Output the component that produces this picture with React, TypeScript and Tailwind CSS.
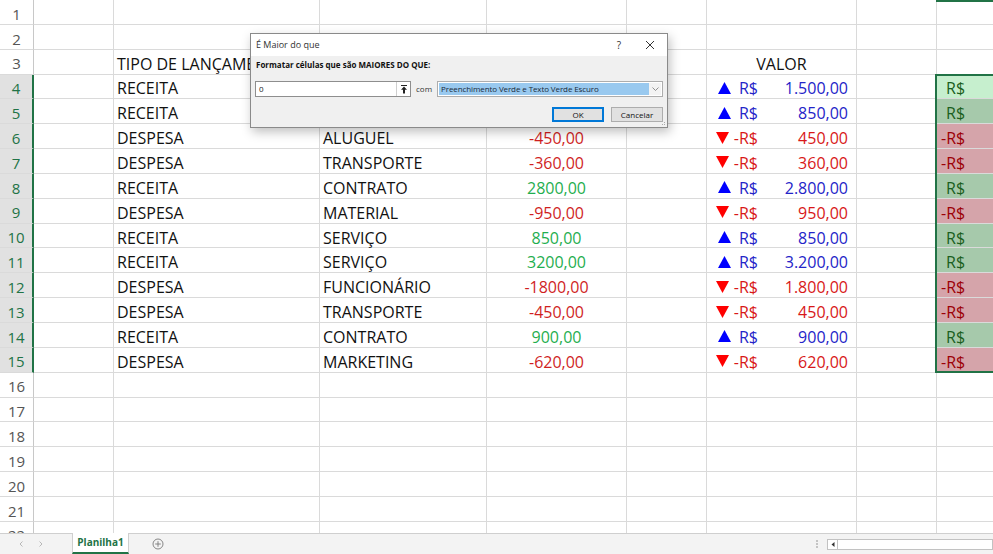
import React from "react"

interface Entry {
  tipo: string
  cat: string
  v: number
}

const entries: Entry[] = [
  { tipo: "RECEITA", cat: "VENDA", v: 1500 },
  { tipo: "RECEITA", cat: "SERVIÇO", v: 850 },
  { tipo: "DESPESA", cat: "ALUGUEL", v: -450 },
  { tipo: "DESPESA", cat: "TRANSPORTE", v: -360 },
  { tipo: "RECEITA", cat: "CONTRATO", v: 2800 },
  { tipo: "DESPESA", cat: "MATERIAL", v: -950 },
  { tipo: "RECEITA", cat: "SERVIÇO", v: 850 },
  { tipo: "RECEITA", cat: "SERVIÇO", v: 3200 },
  { tipo: "DESPESA", cat: "FUNCIONÁRIO", v: -1800 },
  { tipo: "DESPESA", cat: "TRANSPORTE", v: -450 },
  { tipo: "RECEITA", cat: "CONTRATO", v: 900 },
  { tipo: "DESPESA", cat: "MARKETING", v: -620 },
]

// 1500 -> "1.500,00"
function brl(n: number) {
  const s = String(Math.abs(n))
  const withDots = s.replace(/\B(?=(\d{3})+(?!\d))/g, ".")
  return `${withDots},00`
}

const cell = "h-full border-r border-b border-[#dadada] flex items-center shrink-0 pt-[4px]"

function Row({ n, children }: { n: number; children?: React.ReactNode }) {
  const selected = n >= 4 && n <= 15
  return (
    <div className="flex h-[24.85px]">
      <div
        className={`w-[34px] h-full shrink-0 flex items-center justify-center pt-[4px] text-[15px] border-b border-[#dadada] ${
          selected
            ? "bg-[#e1e1e1] text-[#217346] border-r-2 border-r-[#217346]"
            : "bg-white text-[#555] border-r border-r-[#c8c8c8]"
        }`}
      >
        {n}
      </div>
      {children ?? (
        <>
          <div className={`${cell} w-[80px]`} />
          <div className={`${cell} w-[206px]`} />
          <div className={`${cell} w-[167px]`} />
          <div className={`${cell} w-[140px]`} />
          <div className={`${cell} w-[80px]`} />
          <div className={`${cell} w-[150px]`} />
          <div className={`${cell} w-[80px]`} />
          <div className={`${cell} w-[80px]`} />
        </>
      )}
    </div>
  )
}

function Arrow({ up }: { up: boolean }) {
  return (
    <svg width="13" height="12" viewBox="0 0 13 12" className="shrink-0">
      {up ? (
        <path d="M6.5 0 L13 12 H0 Z" fill="#0000ff" />
      ) : (
        <path d="M0 0 H13 L6.5 12 Z" fill="#ff0000" />
      )}
    </svg>
  )
}

function DataRow({ n, e }: { n: number; e: Entry }) {
  const pos = e.v > 0
  const hBg =
    n === 4 ? "bg-[#c6efce]" : pos ? "bg-[#a6c9ab]" : "bg-[#d5a4aa]"
  return (
    <Row n={n}>
      <div className={`${cell} w-[80px]`} />
      <div className={`${cell} w-[206px] pl-[3px]`}>{e.tipo}</div>
      <div className={`${cell} w-[167px] pl-[3px]`}>{e.cat}</div>
      <div
        className={`${cell} w-[140px] justify-center ${
          pos ? "text-[#1fae4f]" : "text-[#d01f1f]"
        }`}
      >
        {e.v},00
      </div>
      <div className={`${cell} w-[80px]`} />
      <div
        className={`${cell} w-[150px] ${pos ? "text-[#2424c8]" : "text-[#d81818]"}`}
      >
        <span className="w-[51px] flex items-center justify-end">
          {pos ? (
            <>
              <span className="-mt-[1px] mr-[8px] flex"><Arrow up /></span>R$
            </>
          ) : (
            <>
              <span className="-mt-[1px] mr-[5px] flex"><Arrow up={false} /></span>-R$
            </>
          )}
        </span>
        <span className="flex-1 text-right pr-[8px]">{brl(e.v)}</span>
      </div>
      <div className={`${cell} w-[80px]`} />
      <div
        className={`${cell} w-[80px] ${hBg} ${
          pos ? "text-[#1b5e20] pl-[9px]" : "text-[#9c0006] pl-[4px]"
        }`}
      >
        {pos ? "R$" : "-R$"}
      </div>
    </Row>
  )
}

function Dialog() {
  return (
    <div className="absolute left-[250px] top-[33px] w-[418px] h-[95px] border border-[#8a8a8a] bg-[#f0f0f0] shadow-[2px_4px_10px_rgba(0,0,0,0.25)] font-['Open_Sans',sans-serif] text-[8px] text-[#222]">
      <div className="h-[22px] bg-white flex items-center pl-[5px] pr-[12px]">
        <span className="text-[9px] text-[#333]">É Maior do que</span>
        <span className="ml-auto text-[10px] text-[#333] mr-[24px]">?</span>
        <svg width="10" height="10" viewBox="0 0 10 10" className="text-[#333]">
          <path d="M1 1 L9 9 M9 1 L1 9" stroke="currentColor" strokeWidth="1" />
        </svg>
      </div>
      <div className="px-[4px] pt-[2px]">
        <div className="font-bold text-[8px] text-[#111] h-[14px] flex items-center pl-[1px]">
          Formatar células que são MAIORES DO QUE:
        </div>
        <div className="flex items-center mt-[9px] h-[16px]">
          <div className="w-[156px] h-[16px] border border-[#8e8e8e] bg-white flex items-center">
            <span className="pl-[3px] flex-1">0</span>
            <div className="w-[14px] h-full border-l border-[#cfcfcf] flex items-center justify-center">
              <svg width="8" height="9" viewBox="0 0 8 9">
                <path d="M4 1.5 L1 4.8 H3 V8.5 H5 V4.8 H7 Z" fill="#222" />
                <path d="M1 0.5 H7" stroke="#222" strokeWidth="1" />
              </svg>
            </div>
          </div>
          <span className="ml-[5px] w-[21px] text-[#333]">com</span>
          <div className="w-[226px] h-[16px] border border-[#adadad] bg-white flex items-center p-[1px]">
            <div className="flex-1 h-full bg-[#99c9ef] flex items-center pl-[2px] text-[#1a2a3a] tracking-[-0.1px]">
              Preenchimento Verde e Texto Verde Escuro
            </div>
            <div className="w-[12px] h-full flex items-center justify-center bg-[#f3f3f3]">
              <svg width="7" height="4" viewBox="0 0 7 4">
                <path d="M0.5 0.5 L3.5 3.5 L6.5 0.5" stroke="#777" fill="none" strokeWidth="0.8" />
              </svg>
            </div>
          </div>
        </div>
        <div className="flex justify-end mt-[10px] gap-[7px]">
          <div className="w-[52px] h-[15px] border-2 border-[#0078d7] bg-[#e1e1e1] flex items-center justify-center text-[#111]">
            OK
          </div>
          <div className="w-[52px] h-[15px] border border-[#adadad] bg-[#e1e1e1] flex items-center justify-center text-[#111]">
            Cancelar
          </div>
        </div>
      </div>
      <svg width="6" height="6" viewBox="0 0 6 6" className="absolute right-[1px] bottom-[1px]">
        <rect x="4" y="4" width="1" height="1" fill="#aaa" />
        <rect x="2" y="4" width="1" height="1" fill="#aaa" />
        <rect x="4" y="2" width="1" height="1" fill="#aaa" />
      </svg>
    </div>
  )
}

function TabBar() {
  return (
    <div className="h-[21px] bg-[#f3f3f3] border-t border-[#cfcfcf] flex items-stretch font-['Open_Sans',sans-serif] relative">
      <div className="w-[72px] flex items-center gap-[16px] pl-[19px]">
        <svg width="4" height="6" viewBox="0 0 4 6">
          <path d="M3.5 0.5 L1 3 L3.5 5.5" stroke="#b8b8b8" fill="none" strokeWidth="1" />
        </svg>
        <svg width="4" height="6" viewBox="0 0 4 6">
          <path d="M0.5 0.5 L3 3 L0.5 5.5" stroke="#b8b8b8" fill="none" strokeWidth="1" />
        </svg>
      </div>
      <div className="w-[57px] -mt-px bg-white border-x border-[#cfcfcf] border-b-2 border-b-[#217346] flex items-center justify-center text-[10px] font-bold text-[#217346]">
        Planilha1
      </div>
      <div className="ml-[23px] flex items-center">
        <svg width="12" height="12" viewBox="0 0 12 12">
          <circle cx="6" cy="6" r="5" fill="none" stroke="#7a7a7a" strokeWidth="0.9" />
          <path d="M6 3.2 V8.8 M3.2 6 H8.8" stroke="#7a7a7a" strokeWidth="0.9" />
        </svg>
      </div>
      <div className="ml-auto flex items-center">
        <span className="mr-[9px] flex flex-col gap-[1px]">
          <span className="w-[2px] h-[2px] bg-[#c4c4c4]" />
          <span className="w-[2px] h-[2px] bg-[#c4c4c4]" />
          <span className="w-[2px] h-[2px] bg-[#c4c4c4]" />
        </span>
        <div className="w-[166px] h-[11px] bg-white border border-[#c2c2c2] flex items-center">
          <div className="w-[10px] h-full border-r border-[#c2c2c2] flex items-center justify-center">
            <svg width="4" height="5" viewBox="0 0 4 5">
              <path d="M3.5 0 L0.5 2.5 L3.5 5 Z" fill="#333" />
            </svg>
          </div>
        </div>
      </div>
      <div className="absolute left-0 right-0 -bottom-px h-px bg-[#cfe6d6]" />
    </div>
  )
}

export default function App() {
  const rowNums = Array.from({ length: 22 }, (_, i) => i + 1)
  return (
    <div className="w-[993px] h-[554px] relative overflow-hidden bg-white font-['Open_Sans',sans-serif] text-[16px] text-[#111]">
      <div className="h-[533px] overflow-hidden relative">
        {rowNums.map((n) => {
          if (n === 3) {
            return (
              <Row key={n} n={n}>
                <div className={`${cell} w-[80px]`} />
                <div className={`${cell} w-[206px] pl-[3px]`}>TIPO DE LANÇAMENTO</div>
                <div className={`${cell} w-[167px] pl-[3px]`}>CATEGORIA</div>
                <div className={`${cell} w-[140px] justify-center`}>VALOR</div>
                <div className={`${cell} w-[80px]`} />
                <div className={`${cell} w-[150px] justify-center`}>VALOR</div>
                <div className={`${cell} w-[80px]`} />
                <div className={`${cell} w-[80px]`} />
              </Row>
            )
          }
          if (n >= 4 && n <= 15) {
            return <DataRow key={n} n={n} e={entries[n - 4]} />
          }
          return <Row key={n} n={n} />
        })}

        {/* selected column header edge */}
        <div className="absolute left-[936px] top-0 w-[60px] h-[2px] bg-[#217346]" />
        {/* selection H4:H15 */}
        <div className="absolute left-[935px] top-[73.5px] w-[80px] h-[299px] border-2 border-[#217346]" />

        <Dialog />
      </div>
      <TabBar />
    </div>
  )
}
